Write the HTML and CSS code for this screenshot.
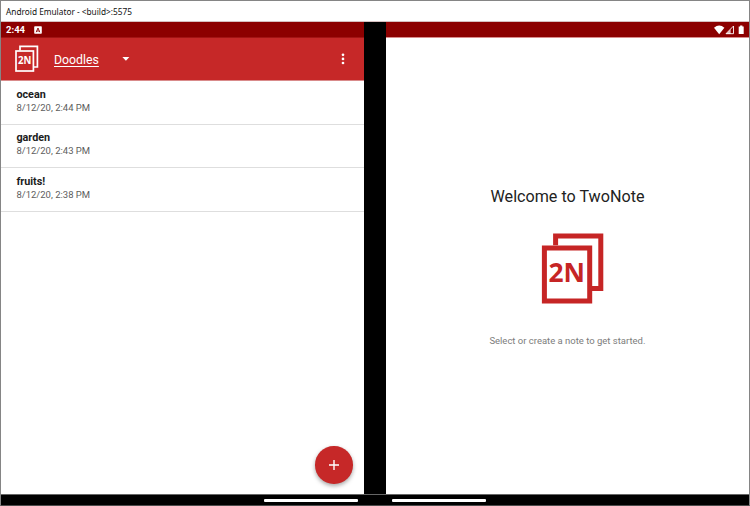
FILE: index.html
```html
<!DOCTYPE html>
<html lang="en">
<head>
<meta charset="utf-8">
<title>Android Emulator</title>
<link rel="stylesheet" href="styles.css">
</head>
<body>
<div class="window">
  <header class="titlebar"><svg width="160" height="20"><text x="5" y="13.5" textLength="126" lengthAdjust="spacingAndGlyphs">Android Emulator - &lt;build&gt;:5575</text></svg></header>
  <main class="screens">
    <section class="screen">
      <div class="status">
        <span class="clock">2:44</span>
        <svg class="badge" width="8" height="8" viewBox="0 0 8 8"><rect x=".2" y=".2" width="7.6" height="7.6" rx=".8" fill="#fff"/><path d="M2.2 6.2 4 2l1.8 4.2M2.8 5h2.4" fill="none" stroke="#8c0000" stroke-width=".9"/></svg>
      </div>
      <div class="appbar">
        <svg class="logo" width="25" height="28" viewBox="0 0 25 28"><path d="M6 5.5V1.4h17.4v20.6H20" fill="none" stroke="#fff" stroke-width="1.7"/><rect x="2" y="6" width="17.4" height="20" fill="none" stroke="#fff" stroke-width="1.7"/><text x="3.9" y="19.2" textLength="13.4" lengthAdjust="spacingAndGlyphs" class="logo-text small">2N</text></svg>
        <span class="category">Doodles</span>
        <svg class="caret" width="8" height="4" viewBox="0 0 8 4"><path d="M.4 0h7L3.9 3.8z" fill="#fff"/></svg>
        <svg class="more" width="4" height="12" viewBox="0 0 4 12"><g fill="#fff"><circle cx="2" cy="1.8" r="1.35"/><circle cx="2" cy="5.9" r="1.35"/><circle cx="2" cy="10" r="1.35"/></g></svg>
      </div>
      <ul class="notes">
        <li><b>ocean</b><span>8/12/20, 2:44 PM</span></li>
        <li><b>garden</b><span>8/12/20, 2:43 PM</span></li>
        <li><b>fruits!</b><span>8/12/20, 2:38 PM</span></li>
      </ul>
      <button class="fab" aria-label="Add note"><svg width="12" height="12" viewBox="0 0 12 12"><path d="M6 1v10M1 6h10" stroke="#fff" stroke-width="1.4"/></svg></button>
    </section>
    <div class="hinge"></div>
    <section class="screen">
      <div class="status icons">
        <svg width="31" height="10" viewBox="0 0 31 10"><path d="M0 2.8Q5.2-1.6 10.4 2.8L5.2 9.2z" fill="#fff"/><path d="M12 8.7 19.5 1v7.7z" fill="none" stroke="#fff" stroke-width=".9"/><path d="M12 9l4.6-4.8V9z" fill="#fff" fill-opacity=".75"/><path d="M24.7 1.4h1.4V.4h2.3v1h1.3V9h-5z" fill="#fff"/></svg>
      </div>
      <div class="welcome">
        <svg class="heading" width="166" height="26"><text x="5.5" y="19" textLength="154" lengthAdjust="spacingAndGlyphs">Welcome to TwoNote</text></svg>
        <svg class="biglogo" width="62" height="71" viewBox="0 0 62 71"><path d="M13.6 12.2V3h45.2v52.5H50" fill="none" stroke="#c62525" stroke-width="5"/><rect x="2.4" y="15" width="45.3" height="53" fill="none" stroke="#c62525" stroke-width="5"/><text x="6.5" y="49" textLength="36.5" lengthAdjust="spacingAndGlyphs" class="logo-text big">2N</text></svg>
        <svg class="hint" width="166" height="16"><text x="4.4" y="12" textLength="156" lengthAdjust="spacingAndGlyphs">Select or create a note to get started.</text></svg>
      </div>
    </section>
  </main>
  <footer class="navbar"><i></i><i></i></footer>
</div>
</body>
</html>
```
FILE: styles.css
```css
* { box-sizing: border-box; }
body { margin: 0; font-family: Roboto, "Liberation Sans", sans-serif; }
.window { width: 750px; height: 506px; border: 1px solid #858585; border-bottom-color: #4b4b4b; background: #fff; display: flex; flex-direction: column; overflow: hidden; }
.titlebar { height: 21px; border-bottom: 1px solid #d6c0c0; }
.titlebar svg { display: block; overflow: visible; }
.titlebar text { font: 9.3px "Noto Sans", sans-serif; fill: #111; }
.screens { height: 472px; display: grid; grid-template-columns: 363px 22px 1fr; }
.screen { position: relative; display: flex; flex-direction: column; }
.hinge { background: #000; }
.status { height: 16px; flex: none; background: #8c0000; border-bottom: 1px solid #a21414; color: #fff; display: flex; align-items: center; padding-left: 5px; }
.clock { font-size: 9.5px; font-weight: 700; width: 27.5px; line-height: 14px; }
.icons { justify-content: flex-end; padding: 0 4px 0 0; border-bottom-color: #d98b8b; }
.appbar { height: 43px; flex: none; background: #c62828; border-bottom: 1px solid #d98b8b; display: flex; align-items: center; color: #fff; padding: 0 19px 0 13px; }
.logo { margin-right: 15px; }
.logo-text { font-family: "Open Sans", sans-serif; font-weight: 700; }
.small { font-size: 10.3px; fill: #fff; }
.big { font-size: 27px; fill: #c62525; }
.category { font-size: 12.3px; text-decoration: underline; text-underline-offset: 1.5px; text-decoration-thickness: 1px; width: 67.5px; line-height: 16px; margin-top: 1px; }
.more { margin-left: auto; }
.notes { list-style: none; margin: 0; padding: 0; }
.notes li { height: 43.7px; padding: 6.8px 15px 0 15.4px; border-bottom: 1px solid #dedede; display: flex; flex-direction: column; }
.notes b { font-size: 10.8px; line-height: 14px; color: #1c1c1c; }
.notes span { font-size: 9.5px; line-height: 12.6px; color: #5d5d5d; }
.fab { position: absolute; right: 11.5px; bottom: 10.5px; width: 37.5px; height: 37.5px; border: 0; border-radius: 50%; padding: 0; background: #c62828; box-shadow: 0 2px 4px rgba(0,0,0,.35); display: flex; align-items: center; justify-content: center; }
.welcome { flex: 1; display: flex; flex-direction: column; align-items: center; padding-top: 145px; }
.welcome svg { display: block; flex: none; overflow: visible; }
.heading text { font-size: 16.5px; fill: #222; }
.biglogo { margin: 24px 0 0 11px; }
.hint { margin-top: 28px; }
.hint text { font-size: 9.4px; fill: #7c7c7c; }
.navbar { flex: 1; background: #000; border-top: 1px solid #666; display: flex; gap: 34px; padding: 4px 0 0 263px; }
.navbar i { width: 94px; height: 2.5px; border-radius: 1px; background: #fff; }
```
